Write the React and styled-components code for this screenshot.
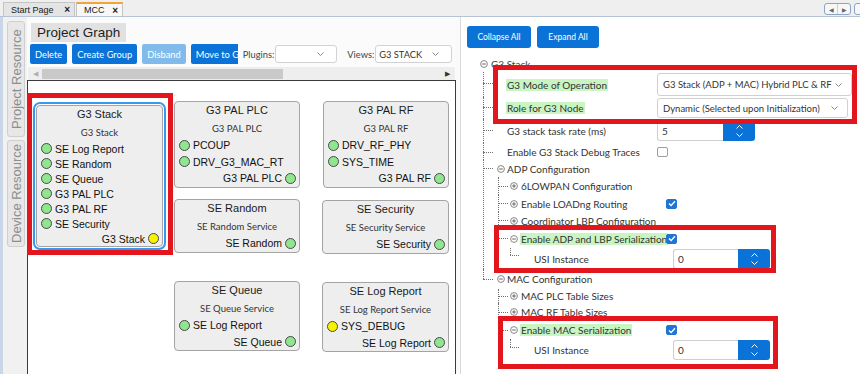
import React from 'react';
import styled, { createGlobalStyle, css } from 'styled-components';

const GlobalStyle = createGlobalStyle`
  html, body { margin: 0; padding: 0; background: #ffffff; }
  body { font-family: Lato, "Liberation Sans", sans-serif; color: #333; }
  *, *::before, *::after { box-sizing: border-box; }
`;

const BLUE = '#0b72d7';
const RED = '#e3161d';
const DOT = { g: '#8fe68f', y: '#f7f200' };

const Window = styled.div`
  width: 860px;
  height: 374px;
  overflow: hidden;
  display: flex;
  flex-direction: column;
  background: #fafafa;
`;

/* ---- top document tabs ---- */
const TabBar = styled.div`
  flex: none;
  height: 17px;
  display: flex;
  align-items: flex-end;
  padding-left: 3px;
  background: #efefef;
  border-bottom: 1px solid #b5c3d5;
`;

const Tab = styled.div`
  width: ${p => p.$w}px;
  height: 14px;
  display: flex;
  align-items: center;
  padding: 0 4px 0 7px;
  margin-right: 1px;
  font: 9px "Liberation Sans", Arial, sans-serif;
  color: #1a1a1a;
  background: ${p => (p.$active ? '#f7f7f7' : '#e4e4e4')};
  border: 1px solid #c4c4c4;
  border-bottom: none;
  ${p => p.$active && css`border-top: 2px solid #f2a33a;`}
`;

const Close = styled.span`
  margin-left: auto;
  font: bold 10px "Liberation Sans", Arial, sans-serif;
  color: #222;
`;

const Nav = styled.div`
  margin-left: auto;
  margin-right: -8px;
  align-self: flex-start;
  margin-top: 3px;
  display: flex;
  gap: 3px;
`;

const NavBox = styled.div`
  width: ${p => p.$w}px;
  height: 12px;
  display: flex;
  border: 1px solid #8fa4c2;
  border-radius: 3px;
  background: #f7f7f7;
  span {
    flex: 1;
    display: flex;
    align-items: center;
    justify-content: center;
    font-size: 6px;
    color: #666;
  }
  span + span { border-left: 1px solid #c7d1de; }
`;

/* ---- body ---- */
const Body = styled.div`
  flex: 1;
  display: flex;
  min-height: 0;
`;

const LeftPane = styled.div`
  width: 456px;
  flex: none;
  display: flex;
`;

const SideRail = styled.div`
  width: 27px;
  flex: none;
  background: #f1f1f1;
  border-left: 3px solid #c8d6e8;
  padding: 4px 0 0 4px;
  display: flex;
  flex-direction: column;
  gap: 3px;
`;

const SideTab = styled.div`
  width: 18px;
  height: ${p => p.$h}px;
  writing-mode: vertical-rl;
  transform: rotate(180deg);
  display: flex;
  align-items: center;
  justify-content: center;
  font: 13px "Liberation Sans", Arial, sans-serif;
  color: #8e8e8e;
  background: #e7e7e7;
  border: 1px solid #cfcfcf;
  border-radius: 3px;
`;

const GraphPane = styled.div`
  width: 429px;
  flex: none;
  display: flex;
  flex-direction: column;
  background: #fbfbfb;
`;

const PaneTitleRow = styled.div`
  height: 26px;
  padding: 4px 0 0 4px;
`;

const PaneTitle = styled.div`
  display: inline-flex;
  align-items: center;
  height: 19px;
  padding: 0 6px;
  background: #e1e1e1;
  font: 13.5px "Liberation Sans", Arial, sans-serif;
  color: #1e1e1e;
`;

const Toolbar = styled.div`
  height: 20px;
  margin-top: 1px;
  padding-left: 3px;
  display: flex;
  align-items: center;
  gap: 5px;
`;

const ToolButton = styled.div`
  height: 20px;
  padding: 0 5px;
  display: flex;
  align-items: center;
  background: ${p => (p.$disabled ? '#80bbec' : BLUE)};
  color: #fff;
  font-size: 9.3px;
  border-radius: 2px;
  white-space: nowrap;
  ${p => p.$clip && css`
    width: ${p.$clip}px;
    border-radius: 2px 0 0 2px;
  `}
`;

const Field = styled.div`
  display: flex;
  align-items: center;
  gap: 1px;
  margin-left: ${p => p.$gap || 0}px;
  font-size: 9.3px;
  color: #444;
`;

const MiniSelect = styled.div`
  width: ${p => p.$w}px;
  height: 18px;
  display: flex;
  align-items: center;
  justify-content: space-between;
  padding: 0 12px 0 3px;
  background: #fff;
  border: 1px solid #d2d2d2;
  border-radius: 3px;
  font-size: 9.3px;
  color: #333;
`;

const HScroll = styled.div`
  height: 13px;
  margin: 3px 1px 0;
  display: flex;
  align-items: center;
  padding: 0 5px;
  background: #eeeeee;
  font-size: 7px;
`;

const ScrollArrow = styled.span`
  color: ${p => (p.$dim ? '#b0b0b0' : '#333')};
  ${p => p.$end && css`margin-left: auto;`}
`;

const Thumb = styled.div`
  width: 241px;
  height: 10px;
  margin-left: 4px;
  background: #c9c9c9;
`;

const Canvas = styled.div`
  flex: 1;
  position: relative;
  background: #fff;
  border: 1px solid #3a3a3a;
  border-bottom: none;
`;

/* ---- graph nodes ---- */
const Node = styled.div`
  position: absolute;
  left: ${p => p.$x}px;
  top: ${p => p.$y}px;
  width: ${p => p.$w}px;
  padding-top: 2px;
  background: #eeeeee;
  border: 1px solid #a4a4a4;
  border-radius: 4px;
  ${p => p.$selected && css`
    outline: 2px solid #3a96f0;
    outline-offset: 1px;
  `}
`;

const NodeTitle = styled.div`
  height: 16px;
  line-height: 16px;
  text-align: center;
  font: 11px "Liberation Sans", Arial, sans-serif;
  color: #1a1a1a;
`;

const NodeSub = styled.div`
  height: 17px;
  line-height: 17px;
  text-align: center;
  font-size: 9.5px;
  color: #333;
`;

const Port = styled.div`
  height: ${p => p.$h}px;
  display: flex;
  align-items: center;
  justify-content: ${p => (p.$out ? 'flex-end' : 'flex-start')};
  gap: 3px;
  padding: 0 3px 0 4px;
  font: 10.5px "Liberation Sans", Arial, sans-serif;
  color: #111;
  white-space: nowrap;
`;

const Dot = styled.span`
  width: 11px;
  height: 11px;
  flex: none;
  border-radius: 50%;
  border: 1px solid #4a4a4a;
  background: ${p => DOT[p.$c]};
`;

const Callout = styled.div`
  position: absolute;
  left: ${p => p.$x}px;
  top: ${p => p.$y}px;
  width: ${p => p.$w}px;
  height: ${p => p.$h}px;
  border: 5px solid ${RED};
  pointer-events: none;
  z-index: 2;
`;

/* ---- properties pane ---- */
const RightPane = styled.div`
  flex: 1;
  position: relative;
  margin-left: 4px;
  background: #fff;
  border-left: 1px solid #d9d9d9;
`;

const ActionBar = styled.div`
  display: flex;
  gap: 6px;
  padding: 9px 0 0 6px;
`;

const ActionButton = styled.div`
  width: ${p => p.$w}px;
  height: 22px;
  display: flex;
  align-items: center;
  justify-content: center;
  background: ${BLUE};
  color: #fff;
  font-size: 8.5px;
  border-radius: 3px;
`;

const Tree = styled.div`
  margin-top: 7px;
  padding-left: 19px;
  font-size: 10px;
  color: #333;
`;

const TreeHead = styled.div`
  height: 17px;
  display: flex;
  align-items: center;
  gap: 3px;
  color: #444;
`;

const Branch = styled.ul`
  list-style: none;
  margin: 0 0 0 ${p => p.$indent}px;
  padding: 0;
`;

const Leaf = styled.li`
  position: relative;
  padding-left: ${p => p.$pad}px;
  &::before {
    content: '';
    position: absolute;
    left: 0;
    top: 0;
    height: ${p => (p.$last ? `${p.$mid}px` : '100%')};
    border-left: 1px dotted #6f6f6f;
  }
  &::after {
    content: '';
    position: absolute;
    left: 0;
    top: ${p => p.$mid}px;
    width: ${p => p.$dash}px;
    border-top: 1px dotted #6f6f6f;
  }
`;

const Row = styled.div`
  height: ${p => p.$h}px;
  display: flex;
  align-items: center;
`;

const Slot = styled.span`
  width: ${p => p.$w}px;
  flex: none;
  display: flex;
  align-items: center;
`;

const Label = styled.span`
  width: ${p => p.$w}px;
  flex: none;
  white-space: nowrap;
`;

const Mark = styled.span`
  display: inline-block;
  height: 12px;
  line-height: 12px;
  margin-left: -1px;
  padding: 0 1px;
  background: #c9f5c2;
`;

const Select = styled.div`
  width: ${p => p.$w}px;
  height: ${p => p.$h}px;
  display: flex;
  align-items: center;
  justify-content: space-between;
  padding: 0 9px 0 5px;
  border: 1px solid #d0d0d0;
  border-radius: 3px;
  background: #fff;
  font-size: 9.5px;
  color: #333;
`;

const SpinBox = styled.div`
  height: 20px;
  display: flex;
`;

const SpinInput = styled.div`
  width: ${p => p.$w}px;
  display: flex;
  align-items: center;
  padding-left: 4px;
  background: #fff;
  border: 1px solid #cfcfcf;
  border-right: none;
  border-radius: 3px 0 0 3px;
  font-size: 10px;
  color: #333;
`;

const SpinButton = styled.div`
  width: 32px;
  display: flex;
  flex-direction: column;
  align-items: center;
  justify-content: center;
  gap: 4px;
  background: ${BLUE};
  border-radius: 0 3px 3px 0;
`;

const Check = styled.span`
  width: 11px;
  height: 10px;
  display: flex;
  align-items: center;
  justify-content: center;
  border-radius: 2px;
  border: 1px solid ${p => (p.$on ? '#1f75d6' : '#9c9c9c')};
  background: ${p => (p.$on ? '#1f75d6' : '#fff')};
`;

/* ---- small drawings ---- */
const Chevron = ({ color = '#8a8a8a', up }) => (
  <svg width="7" height="4" viewBox="0 0 7 4">
    <polyline
      points={up ? '0.5,3.5 3.5,0.5 6.5,3.5' : '0.5,0.5 3.5,3.5 6.5,0.5'}
      fill="none"
      stroke={color}
      strokeWidth="1"
    />
  </svg>
);

const Toggle = ({ open }) => (
  <svg width="8" height="8" viewBox="0 0 8 8">
    <circle cx="4" cy="4" r="3.4" fill="#fff" stroke="#7a7a7a" strokeWidth="0.9" />
    <line x1="2.2" y1="4" x2="5.8" y2="4" stroke="#555" strokeWidth="0.9" />
    {!open && <line x1="4" y1="2.2" x2="4" y2="5.8" stroke="#555" strokeWidth="0.9" />}
  </svg>
);

const Tick = () => (
  <svg width="8" height="7" viewBox="0 0 8 7">
    <polyline points="1,3.6 3.1,5.6 7,1.2" fill="none" stroke="#fff" strokeWidth="1.4" />
  </svg>
);

/* ---- data ---- */
const green = names => names.map(n => ({ n, c: 'g' }));

const NODES = [
  {
    title: 'G3 Stack', sub: 'G3 Stack', x: 8, y: 24, w: 127, row: 15, selected: true,
    ins: green(['SE Log Report', 'SE Random', 'SE Queue', 'G3 PAL PLC', 'G3 PAL RF', 'SE Security']),
    out: { n: 'G3 Stack', c: 'y' },
  },
  {
    title: 'G3 PAL PLC', sub: 'G3 PAL PLC', x: 146, y: 20, w: 126, row: 16.5,
    ins: green(['PCOUP', 'DRV_G3_MAC_RT']), out: { n: 'G3 PAL PLC', c: 'g' },
  },
  {
    title: 'G3 PAL RF', sub: 'G3 PAL RF', x: 295, y: 20, w: 126, row: 16.5,
    ins: green(['DRV_RF_PHY', 'SYS_TIME']), out: { n: 'G3 PAL RF', c: 'g' },
  },
  {
    title: 'SE Random', sub: 'SE Random Service', x: 146, y: 118, w: 126, row: 16.5,
    ins: [], out: { n: 'SE Random', c: 'g' },
  },
  {
    title: 'SE Security', sub: 'SE Security Service', x: 294, y: 119, w: 127, row: 16.5,
    ins: [], out: { n: 'SE Security', c: 'g' },
  },
  {
    title: 'SE Queue', sub: 'SE Queue Service', x: 146, y: 200, w: 126, row: 16.5,
    ins: green(['SE Log Report']), out: { n: 'SE Queue', c: 'g' },
  },
  {
    title: 'SE Log Report', sub: 'SE Log Report Service', x: 294, y: 201, w: 127, row: 16.5,
    ins: [{ n: 'SYS_DEBUG', c: 'y' }], out: { n: 'SE Log Report', c: 'g' },
  },
];

const TREE = [
  { label: 'G3 Mode of Operation', hl: true, h: 25, mid: 11,
    value: { kind: 'select', text: 'G3 Stack (ADP + MAC) Hybrid PLC & RF', w: 195, h: 23 } },
  { label: 'Role for G3 Node', hl: true, h: 22, mid: 10,
    value: { kind: 'select', text: 'Dynamic (Selected upon Initialization)', w: 191, h: 20 } },
  { label: 'G3 stack task rate (ms)', h: 24, mid: 11, value: { kind: 'spin', text: '5', w: 66 } },
  { label: 'Enable G3 Stack Debug Traces', h: 17, mid: 9, value: { kind: 'check', on: false } },
  { label: 'ADP Configuration', toggle: 'open', h: 17, mid: 8, children: [
    { label: '6LOWPAN Configuration', toggle: 'closed', h: 18, mid: 9 },
    { label: 'Enable LOADng Routing', toggle: 'closed', h: 17, mid: 8, value: { kind: 'check', on: true } },
    { label: 'Coordinator LBP Configuration', toggle: 'closed', h: 17, mid: 8 },
    { label: 'Enable ADP and LBP Serialization', toggle: 'open', hl: true, h: 19, mid: 9,
      value: { kind: 'check', on: true }, children: [
        { label: 'USI Instance', h: 21, mid: 7, value: { kind: 'spin', text: '0', w: 65 } },
      ] },
  ] },
  { label: 'MAC Configuration', toggle: 'open', h: 20, mid: 10, children: [
    { label: 'MAC PLC Table Sizes', toggle: 'closed', h: 14, mid: 7 },
    { label: 'MAC RF Table Sizes', toggle: 'closed', h: 18, mid: 9 },
    { label: 'Enable MAC Serialization', toggle: 'open', hl: true, h: 18, mid: 9,
      value: { kind: 'check', on: true }, children: [
        { label: 'USI Instance', h: 22, mid: 8, value: { kind: 'spin', text: '0', w: 65 } },
      ] },
  ] },
];

// per depth: leaf padding, toggle slot, label column, dash length, branch indent
const LEVELS = [
  { pad: 14, slot: 10, label: 150, dash: 10, indent: 3 },
  { pad: 12, slot: 11, label: 145, dash: 10, indent: 1 },
  { pad: 24, slot: 0, label: 139, dash: 9, indent: 0 },
];

function Value({ v }) {
  if (!v) return null;
  if (v.kind === 'select') {
    return (
      <Select $w={v.w} $h={v.h}>
        {v.text}
        <Chevron />
      </Select>
    );
  }
  if (v.kind === 'spin') {
    return (
      <SpinBox>
        <SpinInput $w={v.w}>{v.text}</SpinInput>
        <SpinButton>
          <Chevron color="#fff" up />
          <Chevron color="#fff" />
        </SpinButton>
      </SpinBox>
    );
  }
  return <Check $on={v.on}>{v.on && <Tick />}</Check>;
}

function TreeItems({ items, depth }) {
  const lv = LEVELS[depth];
  return (
    <Branch $indent={lv.indent}>
      {items.map((it, i) => (
        <Leaf
          key={it.label + i}
          $pad={lv.pad}
          $mid={it.mid}
          $dash={lv.dash}
          $last={i === items.length - 1}
        >
          <Row $h={it.h}>
            {lv.slot > 0 && (
              <Slot $w={lv.slot}>{it.toggle && <Toggle open={it.toggle === 'open'} />}</Slot>
            )}
            <Label $w={lv.label}>{it.hl ? <Mark>{it.label}</Mark> : it.label}</Label>
            <Value v={it.value} />
          </Row>
          {it.children && <TreeItems items={it.children} depth={depth + 1} />}
        </Leaf>
      ))}
    </Branch>
  );
}

function GraphNode({ node }) {
  return (
    <Node $x={node.x} $y={node.y} $w={node.w} $selected={node.selected}>
      <NodeTitle>{node.title}</NodeTitle>
      <NodeSub>{node.sub}</NodeSub>
      {node.ins.map(p => (
        <Port key={p.n} $h={node.row}>
          <Dot $c={p.c} />
          {p.n}
        </Port>
      ))}
      <Port $h={node.row} $out>
        {node.out.n}
        <Dot $c={node.out.c} />
      </Port>
    </Node>
  );
}

export default function App() {
  return (
    <>
      <GlobalStyle />
      <Window>
        <TabBar>
          <Tab $w={72}>Start Page<Close>×</Close></Tab>
          <Tab $w={47} $active>MCC<Close>×</Close></Tab>
          <Nav>
            <NavBox $w={27}><span>◀</span><span>▶</span></NavBox>
            <NavBox $w={14} />
          </Nav>
        </TabBar>

        <Body>
          <LeftPane>
            <SideRail>
              <SideTab $h={116}>Project Resource</SideTab>
              <SideTab $h={107}>Device Resource</SideTab>
            </SideRail>

            <GraphPane>
              <PaneTitleRow>
                <PaneTitle>Project Graph</PaneTitle>
              </PaneTitleRow>
              <Toolbar>
                <ToolButton>Delete</ToolButton>
                <ToolButton>Create Group</ToolButton>
                <ToolButton $disabled>Disband</ToolButton>
                <ToolButton $clip={47}>Move to G</ToolButton>
                <Field>
                  Plugins:
                  <MiniSelect $w={62}><span /><Chevron /></MiniSelect>
                </Field>
                <Field $gap={5}>
                  Views:
                  <MiniSelect $w={77}>G3 STACK<Chevron /></MiniSelect>
                </Field>
              </Toolbar>
              <HScroll>
                <ScrollArrow $dim>◀</ScrollArrow>
                <Thumb />
                <ScrollArrow $end>▶</ScrollArrow>
              </HScroll>
              <Canvas>
                {NODES.map(n => <GraphNode key={n.title} node={n} />)}
                <Callout $x={-1} $y={12} $w={146} $h={162} />
              </Canvas>
            </GraphPane>
          </LeftPane>

          <RightPane>
            <ActionBar>
              <ActionButton $w={64}>Collapse All</ActionButton>
              <ActionButton $w={62}>Expand All</ActionButton>
            </ActionBar>
            <Tree>
              <TreeHead>
                <Toggle open />
                G3 Stack
              </TreeHead>
              <TreeItems items={TREE} depth={0} />
            </Tree>
            <Callout $x={32} $y={48} $w={364} $h={59} />
            <Callout $x={33} $y={208} $w={282} $h={48} />
            <Callout $x={37} $y={299} $w={280} $h={53} />
          </RightPane>
        </Body>
      </Window>
    </>
  );
}
